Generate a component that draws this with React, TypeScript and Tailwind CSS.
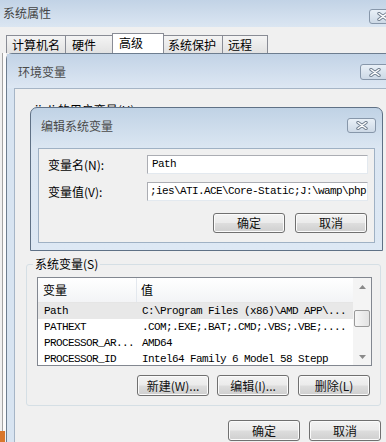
const btn =
  'flex items-center justify-center rounded-[3px] border border-[#707070] bg-[linear-gradient(#f3f3f3_0%,#ebebeb_48%,#dddddd_52%,#cfcfcf_100%)] shadow-[inset_0_0_0_1px_#fbfbfb] text-[12px] leading-none text-[#111]'

const CloseX = () => (
  <svg width="12" height="9" viewBox="0 0 12 9">
    <path d="M2 1.5L10 7.5M10 1.5L2 7.5" stroke="#6f7d8e" strokeWidth="3.4" strokeLinecap="round" />
    <path d="M2 1.5L10 7.5M10 1.5L2 7.5" stroke="#ffffff" strokeWidth="1.5" strokeLinecap="round" />
  </svg>
)

const Arrow = ({ down }: { down?: boolean }) => (
  <svg width="7" height="4" viewBox="0 0 7 4">
    <path d={down ? 'M0 0H7L3.5 4Z' : 'M0 4H7L3.5 0Z'} fill="#8a8a8a" />
  </svg>
)

const rows = [
  { name: 'Path', value: 'C:\\Program Files (x86)\\AMD APP\\...', sel: true },
  { name: 'PATHEXT', value: '.COM;.EXE;.BAT;.CMD;.VBS;.VBE;....' },
  { name: 'PROCESSOR_AR...', value: 'AMD64' },
  { name: 'PROCESSOR_ID', value: 'Intel64 Family 6 Model 58 Stepp' },
]

const mono = "font-['Liberation_Mono',monospace] text-[11px] tracking-[-0.6px]"

export default function App() {
  return (
    <div className="relative w-[386px] h-[442px] overflow-hidden bg-[#f0f0f0] flex flex-col font-['Noto_Sans_CJK_SC',sans-serif] text-black">
      {/* 系统属性 */}
      <div className="h-[27px] shrink-0 flex justify-between bg-[linear-gradient(#c2d3e6,#dbe6f2)]">
        <span className="pl-[3px] pt-[5px] text-[12px] leading-[16px] text-[#444]">系统属性</span>
        <div className="mt-[9px] mr-[-10px] w-[27px] h-[15px] flex items-center justify-center rounded-[3px] border border-[#8797aa] bg-[linear-gradient(#e9f0f7,#cdd9e6)]">
          <CloseX />
        </div>
      </div>

      {/* tabs */}
      <div className="h-[26px] shrink-0 flex items-end pl-[6px] bg-[#f0f0f0]">
        <div className="w-[60px] h-[18px] border border-b-0 border-[#898c95] bg-[linear-gradient(#f4f4f4,#e2e2e2)] pl-[5px] text-[12px] leading-[17px]">计算机名</div>
        <div className="-ml-[1px] w-[48px] h-[18px] border border-b-0 border-[#898c95] bg-[linear-gradient(#f4f4f4,#e2e2e2)] pl-[6px] text-[12px] leading-[17px]">硬件</div>
        <div className="relative -ml-[1px] w-[52px] h-[20px] border border-b-0 border-[#898c95] bg-white pl-[6px] text-[12px] leading-[17px]">高级</div>
        <div className="-ml-[1px] w-[60px] h-[18px] border border-b-0 border-[#898c95] bg-[linear-gradient(#f4f4f4,#e2e2e2)] pl-[4px] text-[12px] leading-[17px]">系统保护</div>
        <div className="-ml-[1px] w-[46px] h-[18px] border border-b-0 border-[#898c95] bg-[linear-gradient(#f4f4f4,#e2e2e2)] pl-[5px] text-[12px] leading-[17px]">远程</div>
      </div>

      <div className="flex-1 flex min-h-0">
        {/* outer tab page edge */}
        <div className="w-[6px] shrink-0 flex flex-col">
          <div className="flex-1 ml-[2px] border-l border-[#a3a3a3] bg-[#fbfbfb]" />
          <div className="h-[11px] w-[5px] bg-[#d9772c]" />
        </div>

        {/* 环境变量 */}
        <div className="w-[392px] shrink-0 flex flex-col border-l border-t border-[#6d7d8f] rounded-tl-[6px] bg-[#d8e4f1]">
          <div className="h-[34px] shrink-0 flex bg-[linear-gradient(#c2d3e6,#dde7f3)]">
            <span className="pl-[11px] pt-[10px] text-[12px] leading-[16px] text-[#4a4a4a]">环境变量</span>
            <div className="ml-auto mr-[8px] mt-[10px] w-[30px] h-[16px] flex items-center justify-center rounded-[3px] border border-[#8797aa] bg-[linear-gradient(#e9f0f7,#cdd9e6)]">
              <CloseX />
            </div>
          </div>
          <div className="flex-1 flex min-h-0">
            <div className="w-[7px] shrink-0 bg-[#d8e4f1]" />
            <div className="flex-1 flex flex-col border-l border-t border-[#a6b5c6] bg-[#f0f0f0]">
              <div className="mt-[14px] pl-[20px] text-[12px] leading-[14px]">jiali 的用户变量(U)</div>

              <fieldset className="mt-[140px] ml-[11px] w-[355px] border border-[#d5dfe5] rounded-[3px] pb-[9px]">
                <legend className="ml-[6px] px-[2px] text-[12px] leading-[14px]">系统变量(S)</legend>
                <div className="mt-[6px] ml-[10px] w-[335px] h-[89px] flex border border-[#828790] bg-white overflow-hidden">
                  <div className="flex-1 flex flex-col min-w-0">
                    <div className="h-[25px] shrink-0 flex border-b border-[#e5e5e5] bg-[linear-gradient(#ffffff,#f3f4f6)] text-[12px]">
                      <div className="w-[99px] shrink-0 flex items-center pl-[5px] border-r border-[#e3e8ee]">变量</div>
                      <div className="flex-1 flex items-center pl-[4px]">值</div>
                    </div>
                    {rows.map((r) => (
                      <div key={r.name} className={`h-[16px] shrink-0 flex items-center whitespace-nowrap ${mono} ${r.sel ? 'bg-[#e8e8e8]' : ''}`}>
                        <div className="w-[99px] shrink-0 pl-[6px] overflow-hidden">{r.name}</div>
                        <div className="flex-1 pl-[5px] overflow-hidden">{r.value}</div>
                      </div>
                    ))}
                  </div>
                  <div className="w-[18px] shrink-0 flex flex-col items-center bg-[#f4f4f4]">
                    <div className="h-[17px] flex items-center justify-center"><Arrow /></div>
                    <div className="mt-[15px] w-[16px] h-[17px] rounded-[2px] border border-[#9a9a9a] bg-[linear-gradient(90deg,#f6f6f6,#e2e2e2)]" />
                    <div className="mt-auto h-[17px] flex items-center justify-center"><Arrow down /></div>
                  </div>
                </div>
                <div className="mt-[9px] ml-[110px] flex gap-[8px]">
                  <div className={`${btn} w-[72px] h-[21px]`}>新建(W)...</div>
                  <div className={`${btn} w-[72px] h-[21px]`}>编辑(I)...</div>
                  <div className={`${btn} w-[72px] h-[21px] ml-[1px]`}>删除(L)</div>
                </div>
              </fieldset>

              <div className="mt-[14px] ml-[213px] flex gap-[9px]">
                <div className={`${btn} w-[72px] h-[21px]`}>确定</div>
                <div className={`${btn} w-[72px] h-[21px]`}>取消</div>
              </div>
            </div>
          </div>
        </div>
      </div>

      {/* 编辑系统变量 dialog, over the window */}
      <div className="absolute left-[30px] top-[107px] w-[353px] h-[144px] flex flex-col border border-[#5f7186] rounded-t-[7px] bg-[linear-gradient(#c0d2e5_0px,#dbe6f2_40px,#dde8f4_100%)]">
        <div className="h-[40px] shrink-0 flex">
          <span className="pl-[10px] pt-[10px] text-[12px] leading-[16px] text-[#4a4a4a]">编辑系统变量</span>
          <div className="ml-auto mr-[6px] mt-[10px] w-[29px] h-[15px] flex items-center justify-center rounded-[3px] border border-[#8797aa] bg-[linear-gradient(#e9f0f7,#cdd9e6)]">
            <CloseX />
          </div>
        </div>
        <div className="flex-1 mx-[7px] mb-[7px] flex flex-col border border-[#9fb1c4] bg-[#f0f0f0]">
          <div className="mt-[6px] flex items-center">
            <div className="w-[108px] pl-[9px] text-[12px] leading-[14px]">变量名(N):</div>
            <div className={`w-[221px] h-[19px] flex items-center pl-[4px] bg-white border border-[#abadb3] border-r-[#e3e9ef] border-b-[#e3e9ef] ${mono}`}>Path</div>
          </div>
          <div className="mt-[8px] flex items-center">
            <div className="w-[108px] pl-[9px] text-[12px] leading-[14px]">变量值(V):</div>
            <div className={`w-[221px] h-[19px] flex items-center pl-[2px] overflow-hidden whitespace-nowrap bg-white border border-[#abadb3] border-r-[#e3e9ef] border-b-[#e3e9ef] ${mono}`}>;ies\ATI.ACE\Core-Static;J:\wamp\php</div>
          </div>
          <div className="mt-[12px] flex justify-end pr-[7px] gap-[10px]">
            <div className={`${btn} w-[72px] h-[20px]`}>确定</div>
            <div className={`${btn} w-[72px] h-[20px]`}>取消</div>
          </div>
        </div>
      </div>
    </div>
  )
}
